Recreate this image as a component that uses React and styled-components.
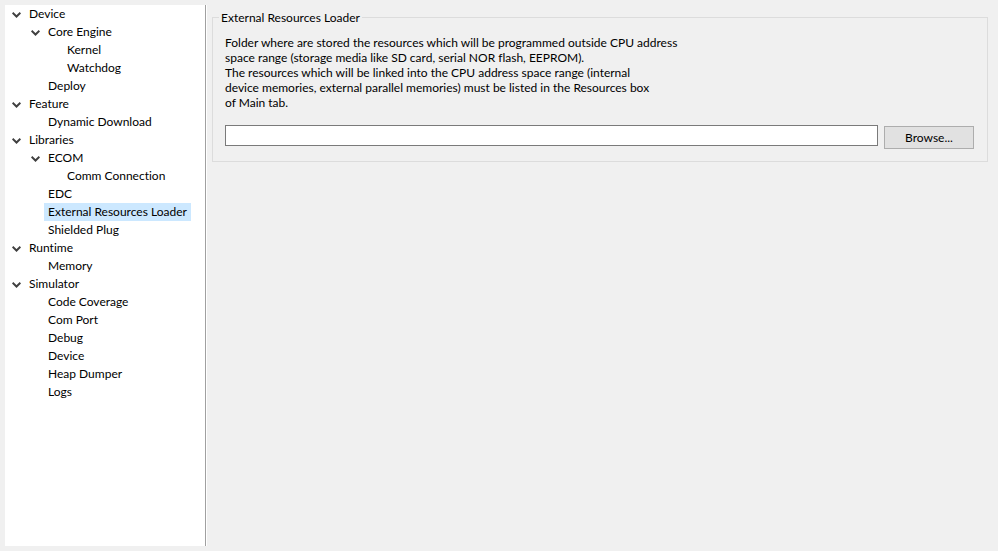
import React, { useState } from "react";
import styled, { createGlobalStyle } from "styled-components";

const GlobalStyle = createGlobalStyle`
  *, *::before, *::after { box-sizing: border-box; }
  body {
    margin: 0;
    background: #f0f0f0;
    color: #000;
    font: 12px/15px "Segoe UI", Lato, "Open Sans", sans-serif;
    font-variant-ligatures: none;
  }
  button, input { font: inherit; font-variant-ligatures: none; color: inherit; }
`;

const Page = styled.div`
  display: grid;
  grid-template-columns: 202px minmax(0, 1fr);
  gap: 5px;
  min-height: 100vh;
  padding: 5px 10px 5px 5px;
`;

const Sidebar = styled.nav`
  background: #fff;
  border-right: 1px solid #fff;
  box-shadow: inset -1px 0 #a0a0a0;
`;

const Branch = styled.ul`
  list-style: none;
  margin: 0;
  padding: 0 0 0 ${(p) => (p.$nested ? 19 : 5)}px;
`;

const Row = styled.div`
  display: flex;
  align-items: center;
  height: 18px;
  padding-left: ${(p) => (p.$leaf ? 15 : 0)}px;
`;

const Toggle = styled.button`
  display: flex;
  align-items: center;
  justify-content: flex-end;
  width: 15px;
  height: 18px;
  padding: 1px 4px 0 0;
  border: 0;
  background: none;
`;

const Chevron = styled.svg`
  flex: none;
  width: 9px;
  height: 6px;
  transform: ${(p) => (p.$open ? "none" : "rotate(-90deg)")};
`;

const Label = styled.button`
  height: 18px;
  padding: 0 4px;
  border: 0;
  white-space: nowrap;
  line-height: 18px;
  background: ${(p) => (p.$selected ? "#cce8ff" : "transparent")};
`;

const Content = styled.main`
  padding-top: 5px;
`;

const Group = styled.fieldset`
  min-width: 0;
  margin: 0;
  padding: 10px 13px 12px 12px;
  border: 1px solid #dcdcdc;
`;

const Legend = styled.legend`
  margin-left: -6px;
  padding: 0 2px;
`;

const Description = styled.p`
  margin: 0 0 15px;
  white-space: pre-line;
`;

const FieldRow = styled.div`
  display: flex;
  align-items: flex-start;
  gap: 6px;
`;

const PathInput = styled.input`
  flex: 1;
  min-width: 0;
  height: 21px;
  padding: 0 4px;
  border: 1px solid #7a7a7a;
  border-radius: 0;
  background: #fff;
`;

const PushButton = styled.button`
  width: 90px;
  height: 23px;
  margin-top: 1px;
  padding: 0;
  border: 1px solid #adadad;
  background: #e1e1e1;
`;

const tree = [
  {
    name: "Device",
    children: [
      { name: "Core Engine", children: [{ name: "Kernel" }, { name: "Watchdog" }] },
      { name: "Deploy" },
    ],
  },
  { name: "Feature", children: [{ name: "Dynamic Download" }] },
  {
    name: "Libraries",
    children: [
      { name: "ECOM", children: [{ name: "Comm Connection" }] },
      { name: "EDC" },
      { name: "External Resources Loader" },
      { name: "Shielded Plug" },
    ],
  },
  { name: "Runtime", children: [{ name: "Memory" }] },
  {
    name: "Simulator",
    children: [
      { name: "Code Coverage" },
      { name: "Com Port" },
      { name: "Debug" },
      { name: "Device" },
      { name: "Heap Dumper" },
      { name: "Logs" },
    ],
  },
];

const description = `Folder where are stored the resources which will be programmed outside CPU address
space range (storage media like SD card, serial NOR flash, EEPROM).
The resources which will be linked into the CPU address space range (internal
device memories, external parallel memories) must be listed in the Resources box
of Main tab.`;

function TreeNode({ node, path, selected, onSelect }) {
  const [open, setOpen] = useState(true);
  const key = `${path}/${node.name}`;
  return (
    <li>
      <Row $leaf={!node.children}>
        {node.children && (
          <Toggle
            type="button"
            aria-label={`Toggle ${node.name}`}
            aria-expanded={open}
            onClick={() => setOpen(!open)}
          >
            <Chevron viewBox="0 0 9 6" $open={open} aria-hidden="true">
              <path d="M0.6 0.8 L4.5 4.5 L8.4 0.8" fill="none" stroke="#404040" strokeWidth="2" />
            </Chevron>
          </Toggle>
        )}
        <Label type="button" $selected={selected === key} onClick={() => onSelect(key)}>
          {node.name}
        </Label>
      </Row>
      {node.children && open && (
        <Branch $nested>
          {node.children.map((child) => (
            <TreeNode key={child.name} node={child} path={key} selected={selected} onSelect={onSelect} />
          ))}
        </Branch>
      )}
    </li>
  );
}

export default function App() {
  const [selected, setSelected] = useState("/Libraries/External Resources Loader");
  const [folder, setFolder] = useState("");
  return (
    <>
      <GlobalStyle />
      <Page>
        <Sidebar aria-label="Configuration sections">
          <Branch>
            {tree.map((node) => (
              <TreeNode key={node.name} node={node} path="" selected={selected} onSelect={setSelected} />
            ))}
          </Branch>
        </Sidebar>
        <Content>
          <Group>
            <Legend>External Resources Loader</Legend>
            <Description id="folder-description">{description}</Description>
            <FieldRow>
              <PathInput
                type="text"
                aria-label="Resources folder"
                aria-describedby="folder-description"
                value={folder}
                onChange={(e) => setFolder(e.target.value)}
              />
              <PushButton type="button">Browse...</PushButton>
            </FieldRow>
          </Group>
        </Content>
      </Page>
    </>
  );
}
